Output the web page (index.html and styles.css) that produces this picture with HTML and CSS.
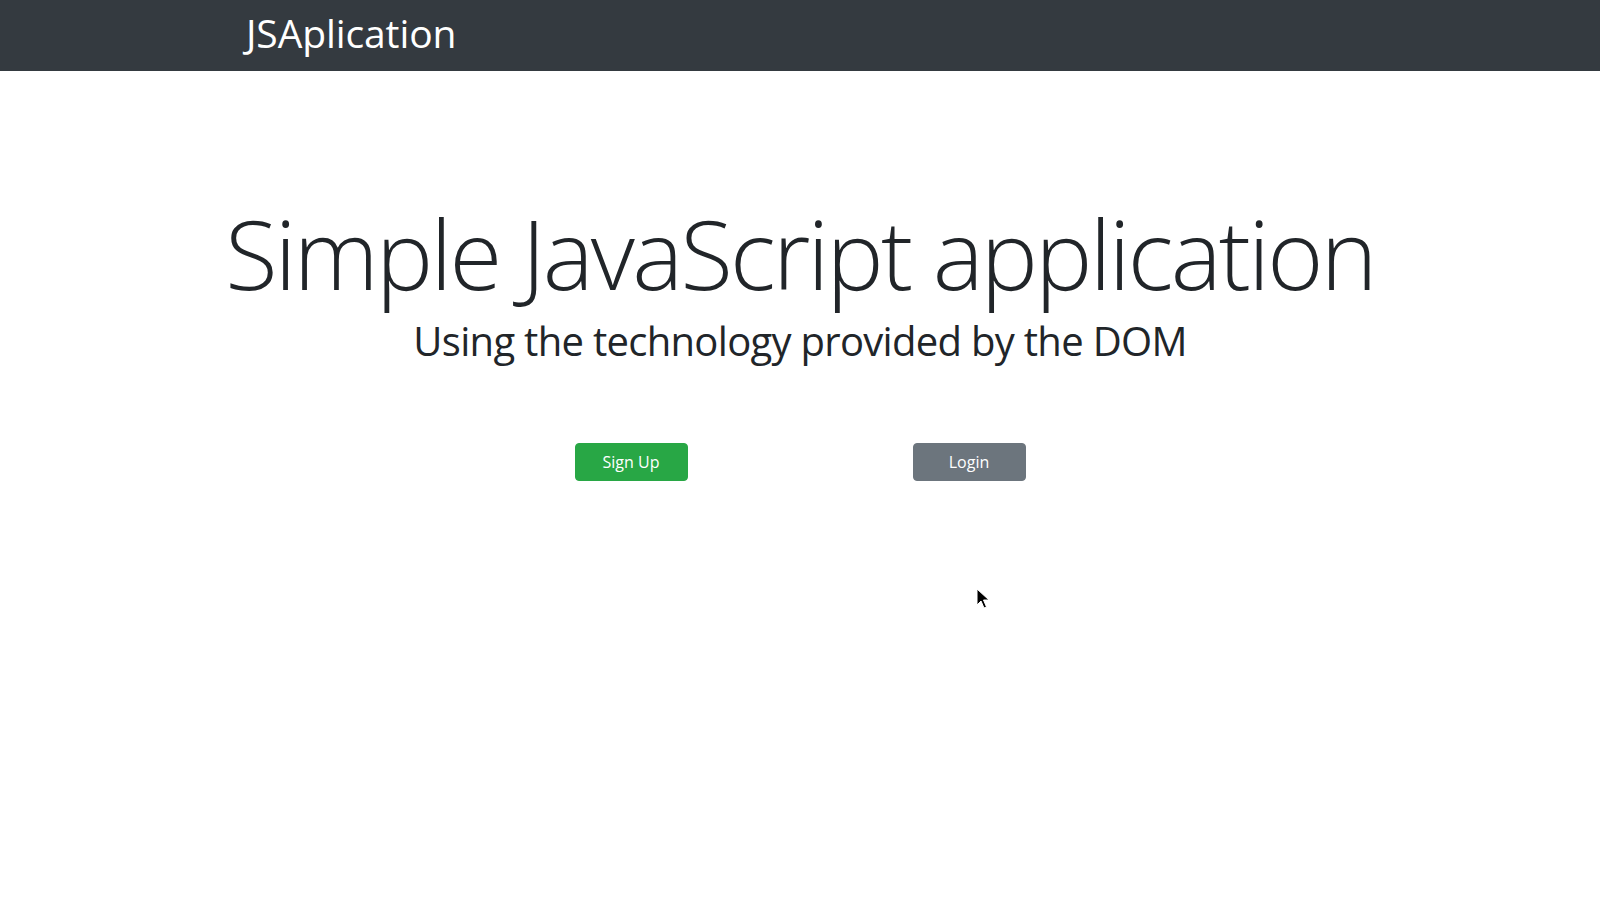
FILE: index.html
```html
<!DOCTYPE html>
<html lang="en">
<head>
<meta charset="utf-8">
<title>JSAplication</title>
<link rel="stylesheet" href="styles.css">
</head>
<body>
<nav class="navbar">
  <div class="container">
    <a class="brand" href="#">JSAplication</a>
  </div>
</nav>
<main class="hero">
  <h1 class="title">Simple JavaScript application</h1>
  <h2 class="subtitle">Using the technology provided by the DOM</h2>
  <div class="actions">
    <button class="btn btn-success">Sign Up</button>
    <button class="btn btn-secondary">Login</button>
  </div>
</main>
<svg class="cursor" width="14" height="22" viewBox="0 0 14 22" aria-hidden="true">
  <path d="M1 1 L1 17 L5 13 L8 20 L10.5 19 L7.5 12 L13 12 Z" fill="#000" stroke="#fff" stroke-width="1"/>
</svg>
</body>
</html>
```
FILE: styles.css
```css
* { box-sizing: border-box; }
html, body { margin: 0; padding: 0; }
body {
  font-family: "Open Sans", "Noto Sans", sans-serif;
  color: #212529;
  background: #fff;
  font-size: 16px;
  line-height: 1.5;
}
.navbar {
  background: #343a40;
  height: 71px;
  display: flex;
  align-items: center;
}
.container {
  width: 1140px;
  margin: 0 auto;
  padding: 0 15px;
}
.brand {
  color: #fff;
  text-decoration: none;
  font-size: 39px;
  line-height: 1.2;
  font-weight: 400;
  letter-spacing: -0.1px;
  display: inline-block;
  margin-top: -4px;
  margin-left: 1px;
}
.hero {
  display: flex;
  flex-direction: column;
  align-items: center;
}
.title {
  margin: 124px 0 0;
  font-size: 96px;
  font-weight: 300;
  line-height: 1.2;
  letter-spacing: -2.7px;
  white-space: nowrap;
}
.subtitle {
  margin: 7px 0 0;
  font-size: 40px;
  font-weight: 400;
  line-height: 1.2;
  letter-spacing: -0.7px;
  white-space: nowrap;
}
.actions {
  display: flex;
  gap: 225px;
  margin-top: 78px;
}
.btn {
  width: 113px;
  height: 38px;
  border: 1px solid transparent;
  border-radius: 4px;
  color: #fff;
  font-family: inherit;
  font-size: 16px;
  line-height: 1.5;
  padding: 0;
  cursor: pointer;
}
.btn-success { background: #28a745; border-color: #28a745; }
.btn-secondary { background: #6c757d; border-color: #6c757d; }
.cursor {
  position: absolute;
  left: 976px;
  top: 588px;
}
```
